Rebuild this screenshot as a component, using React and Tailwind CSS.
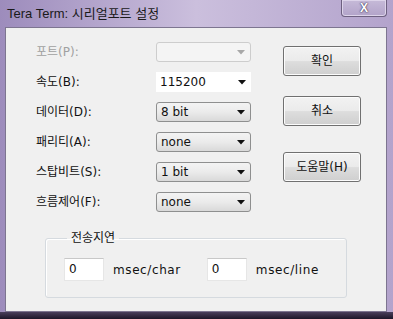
import React from 'react';

const font = "font-['DejaVu_Sans','Noto_Sans_CJK_KR',sans-serif]";

const Arrow = ({ disabled }) => (
  <svg width="8" height="5" viewBox="0 0 8 5" className="shrink-0">
    <path d="M0 0 H8 L4 4.5 Z" fill={disabled ? '#a8a8a8' : '#111'} />
  </svg>
);

const Select = ({ value, variant }) => {
  const base = 'h-[20px] w-[95px] flex items-center justify-between pl-[4px] pr-[5px] text-[12px] text-[#111]';
  if (variant === 'disabled')
    return (
      <div className={`${base} rounded-[3px] border border-[#cdcdcd] bg-[#f4f4f4]`}>
        <span />
        <Arrow disabled />
      </div>
    );
  if (variant === 'white')
    return (
      <div className={`${base} bg-white`}>
        <span>{value}</span>
        <Arrow />
      </div>
    );
  return (
    <div className={`${base} rounded-[3px] border border-[#8e8f8f] bg-gradient-to-b from-[#f3f3f3] via-[#ebebeb] to-[#d9d9d9]`}>
      <span>{value}</span>
      <Arrow />
    </div>
  );
};

const Button = ({ children }) => (
  <div className="h-[30px] w-[78px] rounded-[3px] border border-[#707070] bg-[linear-gradient(to_bottom,#f2f2f2_0%,#ebebeb_48%,#dddddd_52%,#cfcfcf_100%)] shadow-[inset_0_0_0_1px_#fcfcfc] flex items-center justify-center text-[12px] text-[#111]">
    {children}
  </div>
);

const rows = [
  { label: '포트(P):', value: '', variant: 'disabled', muted: true },
  { label: '속도(B):', value: '115200', variant: 'white' },
  { label: '데이터(D):', value: '8 bit' },
  { label: '패리티(A):', value: 'none' },
  { label: '스탑비트(S):', value: '1 bit' },
  { label: '흐름제어(F):', value: 'none' },
];

export default function App() {
  return (
    <div className={`w-[393px] h-[319px] flex flex-col overflow-hidden bg-gradient-to-r from-[#9d8cbc] via-[#cbbfdd] to-[#b3a3cc] ${font}`}>
      {/* Title bar */}
      <div className="h-[27px] shrink-0 flex items-start justify-between pl-[7px] pr-[6px]">
        <span className="mt-[4px] text-[13px] text-[#1a1a1a] font-['Liberation_Sans','Noto_Sans_CJK_KR',sans-serif]">Tera Term: 시리얼포트 설정</span>
        <div className="w-[46px] h-[17px] rounded-b-[4px] border border-t-0 border-[#6d6080] bg-gradient-to-b from-[#c6bad8] to-[#b2a3c9] shadow-[inset_0_0_0_1px_#ddd4ea] flex items-center justify-center">
          <span className="text-[12px] font-bold leading-none text-white [text-shadow:0_0_2px_#3a3050,0_0_1px_#3a3050] font-['Liberation_Sans',sans-serif]">X</span>
        </div>
      </div>

      {/* Client */}
      <div className="flex-1 ml-[5px] mr-[6px] border border-[#7d7590] bg-[#f0f0f0] flex flex-col">
        <div className="flex pl-[30px] pt-[14px]">
          <div className="flex flex-col gap-[10px] w-[120px]">
            {rows.map((r) => (
              <div key={r.label} className={`h-[20px] flex items-center text-[12px] ${r.muted ? 'text-[#a0a0a0]' : 'text-[#111]'}`}>
                {r.label}
              </div>
            ))}
          </div>
          <div className="flex flex-col gap-[10px]">
            {rows.map((r) => (
              <Select key={r.label} value={r.value} variant={r.variant} />
            ))}
          </div>
          <div className="flex flex-col ml-[32px] pt-[4px]">
            <Button>확인</Button>
            <div className="mt-[20px]"><Button>취소</Button></div>
            <div className="mt-[26px]"><Button>도움말(H)</Button></div>
          </div>
        </div>

        <fieldset className="ml-[39px] mt-[18px] w-[302px] h-[68px] rounded-[3px] border border-[#d5dadf] shadow-[inset_1px_1px_0_#ffffff] pl-[18px]">
          <legend className="ml-[3px] px-[4px] text-[12px] text-[#111] leading-[16px]">전송지연</legend>
          <div className="flex items-center mt-[12px] text-[12px] text-[#111]">
            <div className="w-[40px] h-[23px] bg-white border border-[#e6e6e6] border-t-[#c8c8c8] pl-[4px] pt-[1px]">0</div>
            <span className="ml-[9px] tracking-[0.6px]">msec/char</span>
            <div className="ml-[26px] w-[40px] h-[23px] bg-white border border-[#e6e6e6] border-t-[#c8c8c8] pl-[4px] pt-[1px]">0</div>
            <span className="ml-[9px] tracking-[0.6px]">msec/line</span>
          </div>
        </fieldset>
      </div>

      {/* Bottom frame */}
      <div className="h-[7px] shrink-0 bg-gradient-to-b from-[#4a3f5c] to-[#1d1628]" />
    </div>
  );
}
